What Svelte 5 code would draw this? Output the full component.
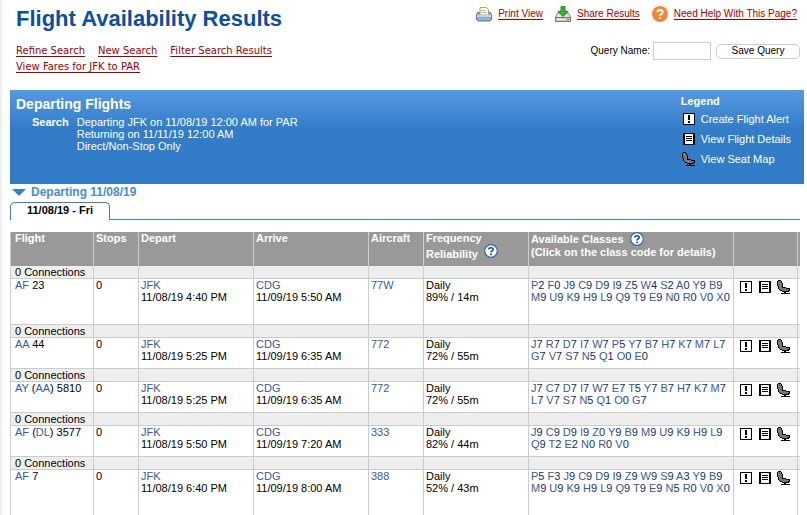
<script>
  const columns = [
    { key: 'flight', label: 'Flight' },
    { key: 'stops', label: 'Stops' },
    { key: 'depart', label: 'Depart' },
    { key: 'arrive', label: 'Arrive' },
    { key: 'aircraft', label: 'Aircraft' }
  ];

  const flights = [
    {
      carrier: 'AF', operator: '', number: '23', depart: '11/08/19 4:40 PM', arrive: '11/09/19 5:50 AM',
      aircraft: '77W', reliability: '89% / 14m', tall: true,
      classes: 'P2 F0 J9 C9 D9 I9 Z5 W4 S2 A0 Y9 B9 M9 U9 K9 H9 L9 Q9 T9 E9 N0 R0 V0 X0'
    },
    {
      carrier: 'AA', operator: '', number: '44', depart: '11/08/19 5:25 PM', arrive: '11/09/19 6:35 AM',
      aircraft: '772', reliability: '72% / 55m', tall: false,
      classes: 'J7 R7 D7 I7 W7 P5 Y7 B7 H7 K7 M7 L7 G7 V7 S7 N5 Q1 O0 E0'
    },
    {
      carrier: 'AY', operator: 'AA', number: '5810', depart: '11/08/19 5:25 PM', arrive: '11/09/19 6:35 AM',
      aircraft: '772', reliability: '72% / 55m', tall: false,
      classes: 'J7 C7 D7 I7 W7 E7 T5 Y7 B7 H7 K7 M7 L7 V7 S7 N5 Q1 O0 G7'
    },
    {
      carrier: 'AF', operator: 'DL', number: '3577', depart: '11/08/19 5:50 PM', arrive: '11/09/19 7:20 AM',
      aircraft: '333', reliability: '82% / 44m', tall: false,
      classes: 'J9 C9 D9 I9 Z0 Y9 B9 M9 U9 K9 H9 L9 Q9 T2 E2 N0 R0 V0'
    },
    {
      carrier: 'AF', operator: '', number: '7', depart: '11/08/19 6:40 PM', arrive: '11/09/19 8:00 AM',
      aircraft: '388', reliability: '52% / 43m', tall: true,
      classes: 'P5 F3 J9 C9 D9 I9 Z9 W9 S9 A3 Y9 B9 M9 U9 K9 H9 L9 Q9 T9 E9 N5 R0 V0 X0'
    }
  ];

  let queryName = $state('');
</script>

{#snippet alertIcon()}
  <svg width="12" height="12" viewBox="0 0 12 12" shape-rendering="crispEdges" aria-hidden="true">
    <rect width="12" height="12" fill="#000" />
    <rect x="1" y="1" width="10" height="10" fill="#fff" />
    <path d="M5 2h2v5H5zM5 8h2v2H5z" fill="#000" />
  </svg>
{/snippet}

{#snippet detailsIcon()}
  <svg width="12" height="12" viewBox="0 0 12 12" shape-rendering="crispEdges" aria-hidden="true">
    <rect width="12" height="12" fill="#000" />
    <rect x="2" y="1" width="8" height="10" fill="#fff" />
    <path d="M3 3h6v1H3zM3 5h6v1H3zM3 7h6v1H3z" fill="#000" />
  </svg>
{/snippet}

{#snippet seatIcon()}
  <svg width="14" height="14" viewBox="0 0 14 14" shape-rendering="crispEdges" aria-hidden="true">
    <path d="M1 0h3v1h1v2h1v4h3v1h4v3h-1v1H5v-1H3v-1H2V9H1V6H0V1h1z" fill="#000" />
    <path d="M1 1h3v2h1v5h4v1h3v1h-1v1H5v-1H3V9H2V6H1z" fill="#777" />
    <path d="M7 12h2v1h4v1H4v-1h3z" fill="#000" />
  </svg>
{/snippet}

{#snippet helpIcon()}
  <svg width="14" height="14" viewBox="0 0 14 14" aria-hidden="true">
    <circle cx="7" cy="7" r="6.3" fill="#fff" stroke="#2b6ca8" stroke-width="1.2" />
    <path d="M4.8 5.4C4.9 3.2 9.2 3.2 9.2 5.5 9.2 7 7 6.9 7 8.6" fill="none" stroke="#17518c" stroke-width="1.6" />
    <rect x="6.1" y="9.5" width="1.8" height="1.7" fill="#17518c" />
  </svg>
{/snippet}

<main>
  <header>
    <div class="heading">
      <h1>Flight Availability Results</h1>
      <nav>
        <div class="links">
          <a href="#refine">Refine Search</a>
          <a href="#new">New Search</a>
          <a href="#filter">Filter Search Results</a>
        </div>
        <div class="links"><a href="#fares">View Fares for JFK to PAR</a></div>
      </nav>
    </div>

    <div class="tools">
      <div class="actions">
        <a class="print" href="#print">
          <svg width="16" height="16" viewBox="0 0 16 16" aria-hidden="true">
            <path d="M1.5 6.500h13l1 2v5l-1.500 1.500h-12L.5 13.500v-5z" fill="#8fa9d6" stroke="#5c78ad" />
            <path d="M4 1.500h6.500l2 2v5.500H4z" fill="#fffbe8" stroke="#b39f78" />
            <path d="M5.500 4.500h4M5.500 6.500h5" stroke="#c6b590" />
            <path d="M1 9h14v2H1z" fill="#c3d4ef" />
            <path d="M3 13h10" stroke="#a5bbe0" />
          </svg>
          <span>Print View</span>
        </a>
        <a class="share" href="#share">
          <svg width="16" height="16" viewBox="0 0 16 16" aria-hidden="true">
            <path d="M2.500 7h11l2 4v4.500H.5V11z" fill="#e4e4e4" stroke="#888" />
            <path d="M.5 11.500h15v4H.5z" fill="#c9c9c9" stroke="#777" />
            <path d="M2 13.500h8" stroke="#fff" />
            <path d="M12 13.500h2" stroke="#35a02c" />
            <path d="M6 .5h4v5h3L8 10.500 3 5.500h3z" fill="#36b432" stroke="#218c20" />
          </svg>
          <span>Share Results</span>
        </a>
        <a class="help" href="#help">
          <svg width="16" height="16" viewBox="0 0 16 16" aria-hidden="true">
            <circle cx="8" cy="8" r="8" fill="#f58634" />
            <path d="M5.300 6.200C5.400 3.300 10.700 3.300 10.700 6.200 10.700 8.200 8 8 8 10" fill="none" stroke="#fff" stroke-width="1.900" />
            <rect x="7" y="11" width="2" height="2" fill="#fff" />
          </svg>
          <span>Need Help With This Page?</span>
        </a>
      </div>
      <form onsubmit={(e) => e.preventDefault()}>
        <label for="query-name">Query Name:</label>
        <input id="query-name" type="text" bind:value={queryName} />
        <button type="submit">Save Query</button>
      </form>
    </div>
  </header>

  <section class="banner">
    <div>
      <h2>Departing Flights</h2>
      <dl>
        <dt>Search</dt>
        <dd>
          Departing JFK on 11/08/19 12:00 AM for PAR<br />
          Returning on 11/11/19 12:00 AM<br />
          Direct/Non-Stop Only
        </dd>
      </dl>
    </div>
    <div class="legend">
      <h3>Legend</h3>
      <ul>
        <li><span class="mark">{@render alertIcon()}</span>Create Flight Alert</li>
        <li><span class="mark">{@render detailsIcon()}</span>View Flight Details</li>
        <li><span class="mark">{@render seatIcon()}</span>View Seat Map</li>
      </ul>
    </div>
  </section>

  <h2 class="day">
    <svg width="14" height="7" viewBox="0 0 14 7" aria-hidden="true"><path d="M0 0h14L7 7z" fill="#3880cb" /></svg>
    Departing 11/08/19
  </h2>

  <div class="tabs"><a href="#fri">11/08/19 - Fri</a></div>

  <table>
    <colgroup>
      <col class="w-flight" /><col class="w-stops" /><col class="w-place" /><col class="w-place" />
      <col class="w-aircraft" /><col class="w-frequency" /><col /><col class="w-icons" /><col class="w-edge" />
    </colgroup>
    <thead>
      <tr>
        {#each columns as column (column.key)}
          <th scope="col">{column.label}</th>
        {/each}
        <th scope="col">Frequency<span class="line low">Reliability {@render helpIcon()}</span></th>
        <th scope="col"><span class="line">Available Classes {@render helpIcon()}</span>(Click on the class code for details)</th>
        <td></td>
        <td></td>
      </tr>
    </thead>
    <tbody>
      {#each flights as flight}
        <tr class="connections">
          <td>0 Connections</td>
          <td></td><td></td><td></td><td></td><td></td><td></td><td></td><td></td>
        </tr>
        <tr class="flight" class:tall={flight.tall}>
          <td>
            <a href="#carrier">{flight.carrier}</a>
            {#if flight.operator}(<a href="#operator">{flight.operator}</a>){/if}
            {flight.number}
          </td>
          <td>0</td>
          <td><a href="#jfk">JFK</a><br />{flight.depart}</td>
          <td><a href="#cdg">CDG</a><br />{flight.arrive}</td>
          <td><a href="#aircraft">{flight.aircraft}</a></td>
          <td>Daily<br />{flight.reliability}</td>
          <td class="codes">
            {#each flight.classes.split(' ') as code}
              <a href="#class">{code[0]}<b>{code[1]}</b></a>{' '}
            {/each}
          </td>
          <td>
            <div class="icons">
              <a href="#alert" aria-label="Create Flight Alert">{@render alertIcon()}</a>
              <a href="#details" aria-label="View Flight Details">{@render detailsIcon()}</a>
              <a class="seat" href="#seat" aria-label="View Seat Map">{@render seatIcon()}</a>
            </div>
          </td>
          <td></td>
        </tr>
      {/each}
    </tbody>
  </table>
</main>

<style>
  :global(body) {
    margin: 0;
    background: #fff;
  }

  main {
    box-sizing: border-box;
    border-left: 2px solid #f0f0f0;
    padding: 0 3px 0 8px;
    font: 11px/12px "Liberation Sans", Arial, Helvetica, sans-serif;
    color: #000;
  }

  a {
    color: #3b5998;
    text-decoration: none;
  }

  svg {
    display: block;
    flex: none;
  }

  h1, h2, h3, ul, dl, dd {
    margin: 0;
    padding: 0;
  }

  header {
    display: flex;
    justify-content: space-between;
    height: 90px;
  }

  .heading {
    padding: 7px 0 0 6px;
  }

  h1 {
    font-size: 22px;
    line-height: 24px;
    color: #0b4ea2;
  }

  nav {
    margin-top: 12px;
    font: 10px/16px "DejaVu Sans", Verdana, sans-serif;
  }

  .links {
    display: flex;
    gap: 13px;
  }

  nav a,
  .actions span {
    color: #900;
    text-decoration: underline;
    text-underline-offset: 2px;
  }

  .tools {
    display: flex;
    flex-direction: column;
    align-items: flex-end;
    padding: 6px 4px 0 0;
  }

  .actions {
    display: flex;
    gap: 12px;
    margin-right: 3px;
    font-size: 10px;
  }

  .actions a {
    display: flex;
    align-items: center;
    gap: 6px;
    height: 16px;
  }

  form {
    display: flex;
    align-items: center;
    margin-top: 20px;
    font-size: 10px;
  }

  input {
    box-sizing: border-box;
    width: 58px;
    height: 18px;
    margin: 0 5px 0 3px;
    padding: 0 2px;
    border: 1px solid #ccc;
    background: #fff;
    font: inherit;
  }

  button {
    box-sizing: border-box;
    width: 84px;
    height: 15px;
    padding: 0;
    border: 1px solid #ccc;
    border-radius: 5px;
    background: #fff;
    color: #000;
    font: inherit;
  }

  .banner {
    display: flex;
    justify-content: space-between;
    box-sizing: border-box;
    min-height: 94px;
    padding: 5px 13px 0 6px;
    background: linear-gradient(#5599e0, #327cc8 40px);
    color: #fff;
  }

  .banner h2 {
    font-size: 14px;
    line-height: 18px;
  }

  dl {
    display: flex;
    gap: 8px;
    margin: 3px 0 0 16px;
  }

  dt {
    font-weight: bold;
  }

  h3 {
    font-size: 11px;
    line-height: 12px;
  }

  ul {
    display: flex;
    flex-direction: column;
    gap: 8px;
    margin-top: 6px;
    list-style: none;
  }

  li {
    display: flex;
    align-items: center;
    height: 12px;
  }

  .mark {
    display: flex;
    justify-content: center;
    width: 16px;
    margin-right: 4px;
  }

  .day {
    display: flex;
    align-items: center;
    gap: 5px;
    height: 16px;
    margin-bottom: 2px;
    padding-left: 2px;
    font-size: 12px;
    color: #4a8ad8;
  }

  .tabs {
    display: flex;
    margin: 0 4px 12px 0;
  }

  .tabs::after {
    content: "";
    flex: 1;
    border-bottom: 1px solid #3f7fc0;
  }

  .tabs a {
    box-sizing: border-box;
    width: 100px;
    height: 18px;
    border: 1px solid #3f7fc0;
    border-bottom: 0;
    border-radius: 5px 5px 0 0;
    color: #000;
    font-weight: bold;
    line-height: 14px;
    text-align: center;
  }

  table {
    width: calc(100% - 4px);
    table-layout: fixed;
    border-collapse: separate;
    border-spacing: 0;
  }

  .w-flight { width: 83px; }
  .w-stops { width: 45px; }
  .w-place { width: 115px; }
  .w-aircraft { width: 55px; }
  .w-frequency { width: 105px; }
  .w-icons { width: 64px; }
  .w-edge { width: 3px; }

  th,
  td {
    box-sizing: border-box;
    padding: 0 0 0 2px;
    border-left: 1px solid #ccc;
    text-align: left;
    vertical-align: top;
  }

  th:first-child,
  td:first-child {
    padding-left: 4px;
  }

  thead th,
  thead td {
    height: 34px;
    background: #999;
    color: #fff;
  }

  .line {
    display: flex;
    align-items: center;
    gap: 6px;
    height: 14px;
  }

  .line.low {
    align-items: flex-end;
  }

  .low :global(svg) {
    margin-bottom: 2px;
  }

  .low {
    padding-top: 2px;
  }

  tbody td {
    border-bottom: 1px solid #ccc;
  }

  tbody tr:last-child td {
    border-bottom: 0;
  }

  .connections td {
    height: 13px;
    background: #eee;
  }

  .flight td {
    height: 31px;
  }

  .flight.tall td {
    height: 46px;
  }

  .flight.tall:last-child td {
    height: 45px;
  }

  .codes b {
    color: #0f2f5f;
    font-weight: normal;
  }

  .icons {
    display: flex;
    gap: 7px;
    padding: 2px 0 0 4px;
  }

  .seat {
    margin: -1px 0 0 -1px;
  }
</style>
